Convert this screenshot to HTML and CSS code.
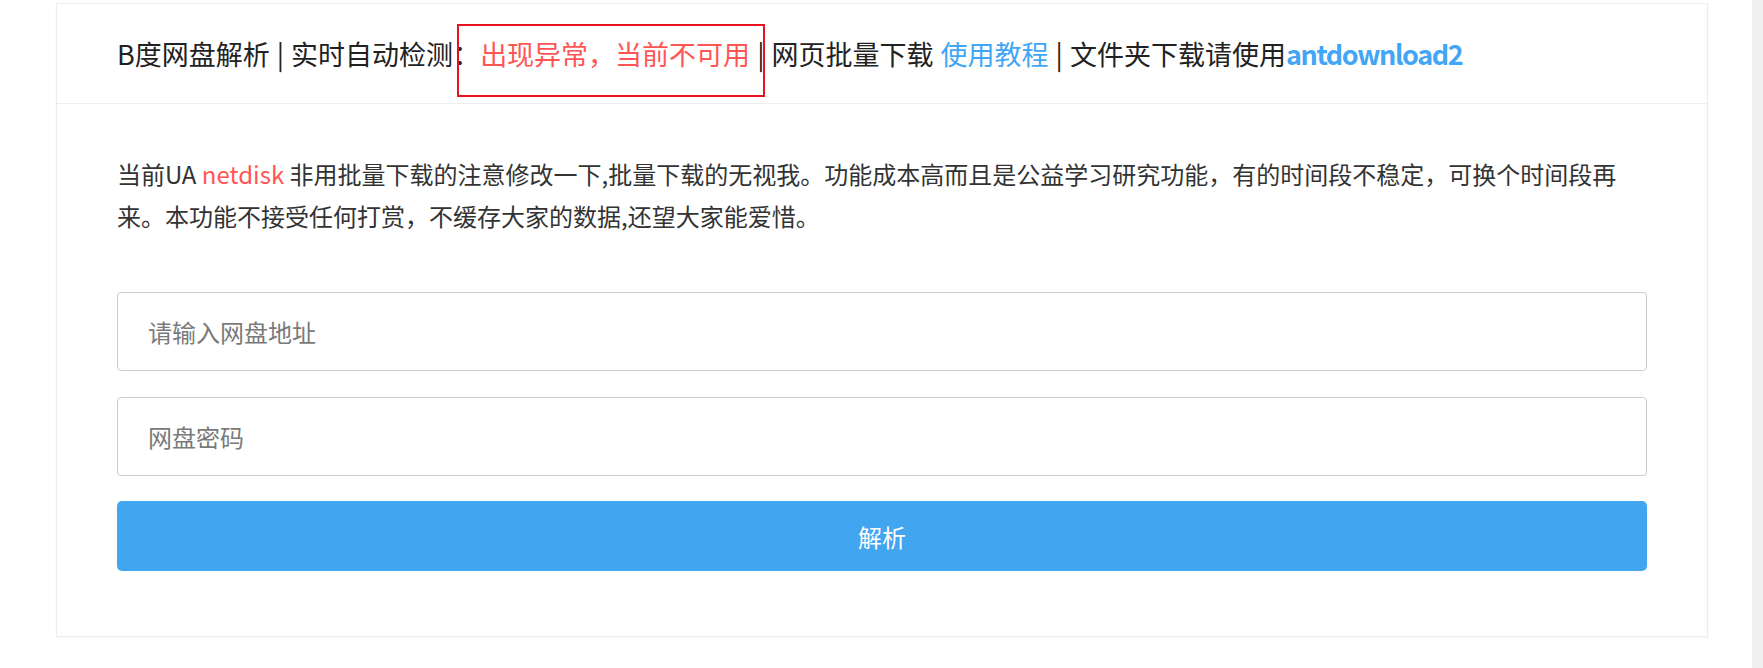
FILE: index.html
```html
<!DOCTYPE html>
<html lang="zh-CN">
    <head>
        <meta charset="UTF-8">
        <meta name="viewport" content="width=device-width, initial-scale=1.0">
        <title>B度网盘解析</title>
        <link rel="stylesheet" href="styles.css">
    </head>
    <body>
        <div class="page">
            <main class="main">
                <div class="card">
                    <div class="card-header">B度网盘解析 | 实时自动检测：<span class="status">出现异常，当前不可用</span> | 网页批量下载 <a class="link" href="#">使用教程</a> | 文件夹下载请使用<a class="link bold" href="#">antdownload2</a></div>
                    <div class="card-body">
                        <p class="notice">当前UA <span class="red">netdisk</span> 非用批量下载的注意修改一下,批量下载的无视我。功能成本高而且是公益学习研究功能，有的时间段不稳定，可换个时间段再来。本功能不接受任何打赏，不缓存大家的数据,还望大家能爱惜。</p>
                        <form class="form" onsubmit="return false">
                            <input class="field" type="text" placeholder="请输入网盘地址">
                            <input class="field last" type="text" placeholder="网盘密码">
                            <button class="btn" type="submit">解析</button>
                        </form>
                    </div>
                </div>
            </main>
            <div class="scroll-track"></div>
        </div>
    </body>
</html>
```

FILE: styles.css
```css
html,
body {
  margin: 0;
  padding: 0;
  height: 100%;
  overflow: hidden;
  background: #fff;
}
body {
  font-family: "Noto Sans CJK SC", "Noto Sans", sans-serif;
  color: #333;
}
.page {
  display: flex;
  height: 100vh;
}
.main {
  flex: 1;
  padding: 3px 44px 0 56px;
}
.scroll-track {
  width: 11px;
  background: #f0f0f0;
}

.card {
  box-sizing: border-box;
  width: 1652px;
  height: 634px;
  border: 1px solid #ececec;
  box-shadow: 0 1px 2px rgba(0,0,0,.04);
}
.card-header {
  box-sizing: border-box;
  height: 100px;
  padding: 0 60px;
  line-height: 99px;
  white-space: nowrap;
  font-size: 27px;
  word-spacing: 1px;
  color: #222;
  border-bottom: 1px solid #eee;
}
.status {
  position: relative;
  color: #ff5555;
}
/* red rectangle drawn on the screenshot */
.status::after {
  content: '';
  position: absolute;
  left: -23px;
  right: -15px;
  top: calc(50% - 30px);
  height: 73px;
  box-sizing: border-box;
  border: 2px solid #e8131f;
}
.link {
  color: #42a5f5;
  text-decoration: none;
}
.bold {
  font-weight: 700;
  letter-spacing: -1.4px;
}

.card-body {
  padding: 49px 60px 0;
}
.notice {
  margin: 0;
  font-size: 24px;
  line-height: 42px;
  color: #333;
}
.red {
  color: #ff5555;
}
.form {
  margin-top: 55px;
  display: flex;
  flex-direction: column;
}
.field {
  box-sizing: border-box;
  height: 79px;
  margin: 0 0 26px;
  padding: 0 30px;
  border: 1px solid #ccc;
  border-radius: 4px;
  font-family: inherit;
  font-size: 24px;
  color: #333;
  outline: none;
}
.field.last {
  margin-bottom: 25px;
}
.field::placeholder {
  color: #7a7a7a;
}
.btn {
  height: 70px;
  border: none;
  border-radius: 5px;
  background: #42a5ef;
  color: #fff;
  font-family: inherit;
  font-size: 24px;
  cursor: pointer;
}
```
